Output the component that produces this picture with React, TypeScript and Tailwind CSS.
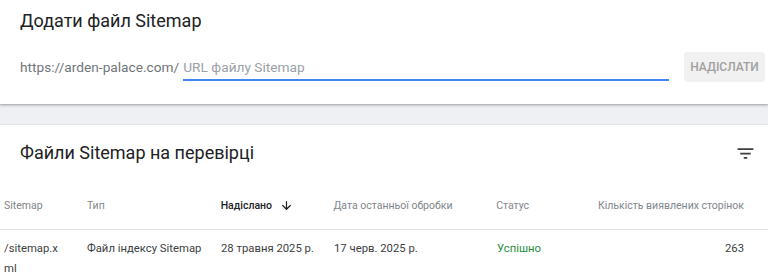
import { ArrowDown } from "lucide-react";

const COLS = [
  { key: "sitemap", label: "Sitemap", w: "w-[83px] pr-[26px]" },
  { key: "type", label: "Тип", w: "w-[134px] pr-3" },
  { key: "sent", label: "Надіслано", w: "w-[113px] pr-3" },
  { key: "read", label: "Дата останньої обробки", w: "w-[163px] pr-3" },
  { key: "status", label: "Статус", w: "w-[102px] pr-3" },
];

const FilterIcon = () => (
  <svg viewBox="0 0 24 24" className="h-[21px] w-[21px] text-[#3c4043]" fill="currentColor" aria-hidden="true">
    <path d="M10 18h4v-2h-4v2zM3 6v2h18V6H3zm3 7h12v-2H6v2z" />
  </svg>
);

export default function App() {
  return (
    <div className="h-[279px] w-[768px] overflow-hidden bg-[#eef0f4] font-['Roboto',sans-serif]">
      {/* add sitemap card */}
      <section className="relative z-10 h-[104px] bg-white shadow-[0_1px_2px_rgba(60,64,67,0.35),0_1px_3px_1px_rgba(60,64,67,0.12)]">
        <h2 className="pl-5 pt-[9px] text-[18px] leading-6 text-[#202124]">Додати файл Sitemap</h2>
        <div className="mt-[19px] flex items-center pl-5 pr-[3px]">
          <span className="text-[13.7px] leading-5 text-[#70757a]">https://arden-palace.com/</span>
          <input
            className="ml-[4px] h-[28px] flex-1 border-b-2 border-[#4285f4] pt-[2px] text-[13.7px] text-[#202124] outline-none placeholder:text-[#9aa0a6]"
            placeholder="URL файлу Sitemap"
          />
          <button className="ml-[15px] h-[30px] w-[81px] rounded-[4px] bg-[#f1f1f1] text-[12px] font-medium text-[#a0a0a0]">
            НАДІСЛАТИ
          </button>
        </div>
      </section>

      {/* submitted sitemaps */}
      <section className="mt-[21px] h-[200px] bg-white shadow-[0_-1px_1px_rgba(60,64,67,0.06)]">
        <div className="flex items-center justify-between pl-5 pr-3 pt-4">
          <h2 className="text-[18px] leading-6 text-[#202124]">Файли Sitemap на перевірці</h2>
          <FilterIcon />
        </div>

        <div className="mt-[17px] flex h-[48px] items-center whitespace-nowrap border-b border-[#e0e0e0] pl-[4px] pr-6 text-[10.5px] leading-4 text-[#80868b]">
          {COLS.map((c) =>
            c.key === "sent" ? (
              <div key={c.key} className={`${c.w} flex items-center gap-2 font-medium text-[#202124]`}>
                {c.label}
                <ArrowDown size={13} strokeWidth={2.2} />
              </div>
            ) : (
              <div key={c.key} className={c.w}>
                {c.label}
              </div>
            ),
          )}
          <div className="flex-1 text-right">Кількість виявлених сторінок</div>
        </div>

        <div className="flex items-start pl-[4px] pr-6 pt-[9px] text-[11.3px] leading-5 text-[#3c4043]">
          <div className="w-[83px] break-all pr-[26px]">/sitemap.xml</div>
          <div className="w-[134px] pr-3">Файл індексу Sitemap</div>
          <div className="w-[113px] pr-3">28 травня 2025 р.</div>
          <div className="w-[163px] pr-3">17 черв. 2025 р.</div>
          <div className="w-[102px] pr-3 text-[#1e8e3e]">Успішно</div>
          <div className="flex-1 text-right">263</div>
        </div>
      </section>
    </div>
  );
}
